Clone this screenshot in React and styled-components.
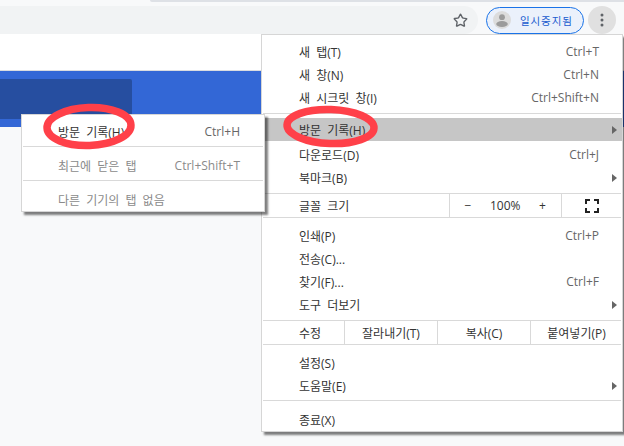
import React from 'react';
import styled, { createGlobalStyle } from 'styled-components';
import { Star } from 'lucide-react';

const GlobalStyle = createGlobalStyle`
  html, body {
    margin: 0;
    padding: 0;
    background: #f8f9fa;
  }
  * {
    box-sizing: border-box;
  }
`;

const Page = styled.div`
  position: relative;
  width: 624px;
  height: 446px;
  overflow: hidden;
  background: #f8f9fa;
  font-family: 'Open Sans', 'Noto Sans CJK KR', sans-serif;
  font-size: 12px;
  color: #333;
`;

const TabEdge = styled.div`
  height: 2px;
  margin-left: 150px;
  margin-bottom: 4px;
  background: #dee1e6;
  border-bottom-left-radius: 3px;
`;

const Toolbar = styled.div`
  display: flex;
  align-items: center;
  height: 28px;
`;

const Omnibox = styled.div`
  width: 478px;
  height: 28px;
  display: flex;
  align-items: center;
  justify-content: flex-end;
  padding-right: 10px;
  background: #f1f3f4;
  border-radius: 0 14px 14px 0;
  color: #5f6368;
`;

const ProfilePill = styled.div`
  width: 98px;
  height: 27px;
  margin-left: 8px;
  padding-left: 6px;
  display: flex;
  align-items: center;
  gap: 9px;
  border: 1px solid #1a73e8;
  border-radius: 14px;
  background: #ebf1fb;
  color: #1a5ccf;
  font-size: 10.5px;
  letter-spacing: 0.9px;
`;

const MenuButton = styled.div`
  width: 28px;
  height: 28px;
  margin-left: 4px;
  display: flex;
  align-items: center;
  justify-content: center;
  border-radius: 50%;
  background: #e0e0e0;
`;

const WhiteBand = styled.div`
  height: 37px;
  background: #fff;
  border-bottom: 1px solid #dadce0;
`;

const BlueBand = styled.div`
  height: 56px;
  padding-top: 8px;
  background: #3367d6;
`;

const DarkBlock = styled.div`
  width: 132px;
  height: 40px;
  background: #264ea0;
  border-radius: 0 2px 2px 0;
`;

const Menu = styled.div`
  position: absolute;
  left: ${({ $left }) => $left}px;
  top: ${({ $top }) => $top}px;
  width: ${({ $width }) => $width}px;
  padding: 5px 0 0;
  background: #fff;
  border: 1px solid #d6d6d6;
  box-shadow: 3px 3px 2px rgba(0, 0, 0, 0.5);
`;

const Row = styled.div`
  display: grid;
  grid-template-columns: 1fr auto ${({ $tail }) => $tail}px;
  align-items: center;
  height: 23px;
  margin-bottom: ${({ $gap }) => $gap || 0}px;
  padding-left: ${({ $indent }) => $indent}px;
  background: ${({ $active }) => ($active ? '#c6c6c6' : 'transparent')};
  color: ${({ $muted }) => ($muted ? '#8a8a8a' : '#333')};
  white-space: pre;
`;

const Label = styled.span`
  word-spacing: 3px;
`;

const Shortcut = styled.span`
  color: ${({ $muted }) => ($muted ? '#8a8a8a' : '#666')};
`;

const Arrow = styled.span`
  width: 0;
  height: 0;
  margin-left: 13px;
  border-left: 5px solid #666;
  border-top: 4px solid transparent;
  border-bottom: 4px solid transparent;
`;

const Separator = styled.div`
  height: 1px;
  margin: ${({ $before }) => $before}px 1px ${({ $after }) => $after}px;
  background: #d9d9d9;
`;

const CellRow = styled.div`
  display: grid;
  grid-template-columns: ${({ $columns }) => $columns};
  height: 23px;
`;

const Cell = styled.div`
  display: flex;
  align-items: center;
  justify-content: ${({ $align }) => $align || 'center'};
  padding-left: ${({ $indent }) => $indent || 0}px;
  border-left: ${({ $divided }) => ($divided ? '1px solid #d9d9d9' : 'none')};
  word-spacing: 3px;
  white-space: pre;
`;

const ZoomCell = styled(Cell)`
  gap: 16px;
`;

const ZoomGlyph = styled.span`
  width: 12px;
  text-align: center;
`;

const Highlight = styled.svg`
  position: absolute;
  left: ${({ $left }) => $left}px;
  top: ${({ $top }) => $top}px;
  width: ${({ $width }) => $width}px;
  height: ${({ $height }) => $height}px;
  overflow: visible;
`;

function Avatar() {
  return (
    <svg width="18" height="18" viewBox="0 0 18 18">
      <circle cx="9" cy="9" r="9" fill="#dcdcdc" />
      <circle cx="9" cy="6.2" r="2.9" fill="#9b9b9b" />
      <ellipse cx="9" cy="13" rx="5.8" ry="3" fill="#9b9b9b" />
    </svg>
  );
}

function Dots() {
  return (
    <svg width="4" height="14" viewBox="0 0 4 14">
      <circle cx="2" cy="2" r="1.5" fill="#5f6368" />
      <circle cx="2" cy="7" r="1.5" fill="#5f6368" />
      <circle cx="2" cy="12" r="1.5" fill="#5f6368" />
    </svg>
  );
}

function FullscreenIcon() {
  return (
    <svg width="14" height="14" viewBox="0 0 14 14" fill="none" stroke="#222" strokeWidth="2">
      <path d="M1 5V1h4M9 1h4v4M13 9v4H9M5 13H1V9" />
    </svg>
  );
}

function Ring({ left, top, width, height, tilt }) {
  const rx = width / 2;
  const ry = height / 2;
  return (
    <Highlight $left={left} $top={top} $width={width} $height={height} viewBox={`0 0 ${width} ${height}`}>
      <ellipse
        cx={rx}
        cy={ry}
        rx={rx - 4}
        ry={ry - 3.5}
        fill="none"
        stroke="#ff4049"
        strokeWidth="7.5"
        transform={`rotate(${tilt} ${rx} ${ry})`}
      />
    </Highlight>
  );
}

function MainRow({ label, shortcut, arrow, active, gap }) {
  return (
    <Row $indent={37} $tail={23} $active={active} $gap={gap}>
      <Label>{label}</Label>
      <Shortcut>{shortcut}</Shortcut>
      {arrow ? <Arrow /> : <span />}
    </Row>
  );
}

function SubRow({ label, shortcut, muted }) {
  return (
    <Row $indent={36} $tail={24} $muted={muted}>
      <Label>{label}</Label>
      <Shortcut $muted={muted}>{shortcut}</Shortcut>
      <span />
    </Row>
  );
}

export default function App() {
  return (
    <Page>
      <GlobalStyle />
      <TabEdge />
      <Toolbar>
        <Omnibox>
          <Star size={15} strokeWidth={2.2} />
        </Omnibox>
        <ProfilePill>
          <Avatar />
          <span>일시중지됨</span>
        </ProfilePill>
        <MenuButton>
          <Dots />
        </MenuButton>
      </Toolbar>
      <WhiteBand />
      <BlueBand>
        <DarkBlock />
      </BlueBand>

      <Menu $left={261} $top={34} $width={362}>
        <MainRow label="새 탭(T)" shortcut="Ctrl+T" />
        <MainRow label="새 창(N)" shortcut="Ctrl+N" />
        <MainRow label="새 시크릿 창(I)" shortcut="Ctrl+Shift+N" />
        <Separator $before={4} $after={4} />
        <MainRow label="방문 기록(H)" arrow active gap={2} />
        <MainRow label="다운로드(D)" shortcut="Ctrl+J" />
        <MainRow label="북마크(B)" arrow />
        <Separator $before={4} $after={0} />
        <CellRow $columns="187px 112px 1fr">
          <Cell $align="flex-start" $indent={37}>글꼴 크기</Cell>
          <ZoomCell $divided $align="flex-start" $indent={12}>
            <ZoomGlyph>−</ZoomGlyph>
            <span>100%</span>
            <ZoomGlyph>+</ZoomGlyph>
          </ZoomCell>
          <Cell $divided>
            <FullscreenIcon />
          </Cell>
        </CellRow>
        <Separator $before={0} $after={6} />
        <MainRow label="인쇄(P)" shortcut="Ctrl+P" />
        <MainRow label="전송(C)..." />
        <MainRow label="찾기(F)..." shortcut="Ctrl+F" />
        <MainRow label="도구 더보기" arrow />
        <Separator $before={4} $after={0} />
        <CellRow $columns="82px 93px 93px 1fr">
          <Cell $align="flex-start" $indent={37}>수정</Cell>
          <Cell $divided>잘라내기(T)</Cell>
          <Cell $divided>복사(C)</Cell>
          <Cell $divided>붙여넣기(P)</Cell>
        </CellRow>
        <Separator $before={0} $after={6} />
        <MainRow label="설정(S)" />
        <MainRow label="도움말(E)" arrow />
        <Separator $before={3} $after={7} />
        <MainRow label="종료(X)" />
      </Menu>

      <Menu $left={21} $top={114} $width={244}>
        <SubRow label="방문 기록(H)" shortcut="Ctrl+H" />
        <Separator $before={3} $after={7} />
        <SubRow label="최근에 닫은 탭" shortcut="Ctrl+Shift+T" muted />
        <Separator $before={3} $after={7} />
        <SubRow label="다른 기기의 탭 없음" muted />
      </Menu>

      <Ring left={43} top={104} width={92} height={45} tilt={-2} />
      <Ring left={283} top={106} width={95} height={41} tilt={2} />
    </Page>
  );
}
